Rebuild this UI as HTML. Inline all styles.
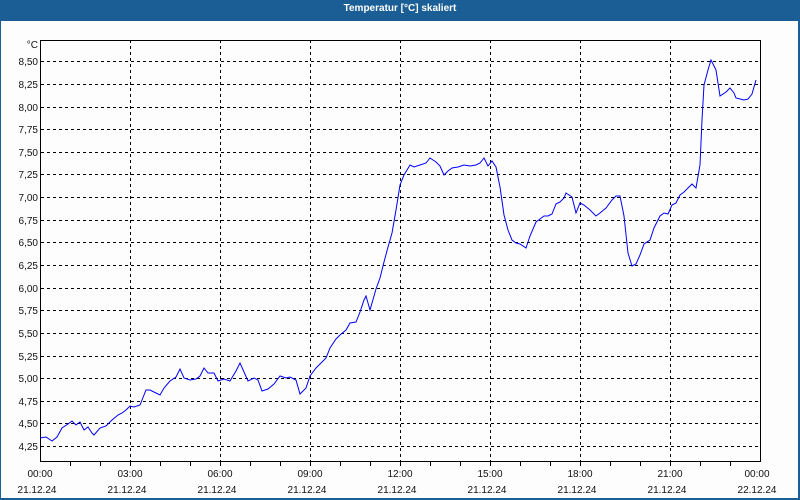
<!DOCTYPE html>
<html><head><meta charset="utf-8"><style>
body{margin:0;width:800px;height:500px;overflow:hidden;background:#1b5e96;font-family:"Liberation Sans",sans-serif}
#win{position:absolute;left:1px;top:21px;width:797px;height:477px;background:#fcfdfc}
#title{position:absolute;left:0;top:0;width:800px;height:21px;line-height:18px;text-align:center;color:#fff;font-weight:bold;font-size:10px}
</style></head><body>
<div id="title">Temperatur [°C] skaliert</div>
<div id="win"></div>
<svg width="800" height="500" style="position:absolute;left:0;top:0" font-family="Liberation Sans, sans-serif" font-size="10">
<g stroke="#000" stroke-dasharray="3,3" stroke-width="1">
<line x1="41" x2="760" y1="61.5" y2="61.5"/><line x1="41" x2="760" y1="84.5" y2="84.5"/><line x1="41" x2="760" y1="107.5" y2="107.5"/><line x1="41" x2="760" y1="129.5" y2="129.5"/><line x1="41" x2="760" y1="152.5" y2="152.5"/><line x1="41" x2="760" y1="174.5" y2="174.5"/><line x1="41" x2="760" y1="197.5" y2="197.5"/><line x1="41" x2="760" y1="220.5" y2="220.5"/><line x1="41" x2="760" y1="242.5" y2="242.5"/><line x1="41" x2="760" y1="265.5" y2="265.5"/><line x1="41" x2="760" y1="288.5" y2="288.5"/><line x1="41" x2="760" y1="310.5" y2="310.5"/><line x1="41" x2="760" y1="333.5" y2="333.5"/><line x1="41" x2="760" y1="356.5" y2="356.5"/><line x1="41" x2="760" y1="378.5" y2="378.5"/><line x1="41" x2="760" y1="401.5" y2="401.5"/><line x1="41" x2="760" y1="423.5" y2="423.5"/><line x1="41" x2="760" y1="446.5" y2="446.5"/>
<line x1="130.5" x2="130.5" y1="40" y2="461"/><line x1="220.5" x2="220.5" y1="40" y2="461"/><line x1="310.5" x2="310.5" y1="40" y2="461"/><line x1="400.5" x2="400.5" y1="40" y2="461"/><line x1="490.5" x2="490.5" y1="40" y2="461"/><line x1="580.5" x2="580.5" y1="40" y2="461"/><line x1="670.5" x2="670.5" y1="40" y2="461"/>
</g>
<rect x="40.5" y="40.5" width="720" height="421" fill="none" stroke="#000"/>
<g stroke="#000">
<path d="M70.5 461v5M100.5 461v5M130.5 461v5M160.5 461v5M190.5 461v5M220.5 461v5M250.5 461v5M280.5 461v5M310.5 461v5M340.5 461v5M370.5 461v5M400.5 461v5M430.5 461v5M460.5 461v5M490.5 461v5M520.5 461v5M550.5 461v5M580.5 461v5M610.5 461v5M640.5 461v5M670.5 461v5M700.5 461v5M730.5 461v5"/>
</g>
<polyline fill="none" stroke="#0000ff" stroke-width="1" points="40,438 46,437 52,441 57,437 62,428 68,424 72,421 76,425 80,422 84,430 88,427 92,433 94,435 100,428 106,426 112,420 118,415 122,413 126,410 130,406 134,407 140,405 146,390 150,390 156,393 160,395 164,388 170,381 176,377 180,369 184,378 190,380 196,379 200,376 204,368 208,373 214,373 218,381 224,379 230,381 236,371 240,363 244,372 248,381 254,378 258,380 262,391 268,389 274,384 280,376 286,378 290,377 296,380 300,394 306,388 310,376 316,368 322,362 326,358 330,348 336,339 340,335 346,330 350,323 356,322 360,312 364,300 366,296 370,310 376,289 380,278 384,262 388,247 392,233 396,210 400,185 404,175 410,165 414,167 420,165 426,163 430,158 436,162 440,166 444,175 448,171 452,168 458,167 464,165 470,166 476,165 480,163 484,158 488,166 492,161 496,167 500,187 504,215 508,230 512,240 516,243 520,244 526,248 530,236 536,222 540,219 544,216 548,216 552,214 556,204 560,202 564,198 566,193 572,197 576,213 580,203 584,205 590,210 596,216 600,213 606,208 612,200 616,196 620,196 624,216 628,253 632,266 636,264 640,255 644,244 650,240 654,228 660,216 664,213 668,214 672,205 676,203 680,195 684,192 688,188 692,184 696,188 700,165 702,120 704,85 708,70 711,60 716,70 720,96 726,92 730,88 734,93 736,98 744,100 748,99 752,94 756,80"/>
<g fill="#111" text-anchor="end">
<text x="38" y="48">°C</text>
<text x="38" y="65">8,50</text><text x="38" y="88">8,25</text><text x="38" y="111">8,00</text><text x="38" y="133">7,75</text><text x="38" y="156">7,50</text><text x="38" y="178">7,25</text><text x="38" y="201">7,00</text><text x="38" y="224">6,75</text><text x="38" y="246">6,50</text><text x="38" y="269">6,25</text><text x="38" y="292">6,00</text><text x="38" y="314">5,75</text><text x="38" y="337">5,50</text><text x="38" y="360">5,25</text><text x="38" y="382">5,00</text><text x="38" y="405">4,75</text><text x="38" y="427">4,50</text><text x="38" y="450">4,25</text>
</g>
<g fill="#111" text-anchor="middle">
<text x="40" y="477">00:00</text><text x="130" y="477">03:00</text><text x="220" y="477">06:00</text><text x="310" y="477">09:00</text><text x="400" y="477">12:00</text><text x="490" y="477">15:00</text><text x="580" y="477">18:00</text><text x="670" y="477">21:00</text><text x="757" y="477">00:00</text>
<text x="37" y="493">21.12.24</text><text x="127" y="493">21.12.24</text><text x="217" y="493">21.12.24</text><text x="307" y="493">21.12.24</text><text x="397" y="493">21.12.24</text><text x="487" y="493">21.12.24</text><text x="577" y="493">21.12.24</text><text x="667" y="493">21.12.24</text><text x="757" y="493">22.12.24</text>
</g>
</svg>
</body></html>
